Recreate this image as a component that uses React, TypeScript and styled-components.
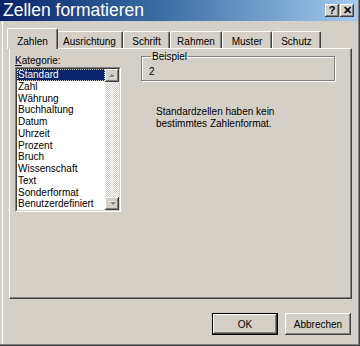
import React from "react";
import styled, { createGlobalStyle } from "styled-components";

const GlobalStyle = createGlobalStyle`
  html, body {
    margin: 0;
    padding: 0;
    background: #d4d0c8;
  }
  body {
    font-family: "Liberation Sans", Arial, sans-serif;
    font-size: 10px;
    color: #000;
  }
`;

const Window = styled.div`
  width: 360px;
  height: 346px;
  box-sizing: border-box;
  padding: 0 2px 2px 0;
  background: #d4d0c8;
  display: flex;
  flex-direction: column;
  box-shadow: inset -1px -1px #404040, inset -2px -2px #808080,
    inset 2px 0 #d4d0c8, inset 3px 0 #fff;
`;

const TitleBar = styled.div`
  height: 21px;
  flex-shrink: 0;
  display: flex;
  align-items: center;
  justify-content: space-between;
  padding: 0 4px 0 3px;
  background: linear-gradient(90deg, #0a246a 0%, #3a6ea5 45%, #a6caf0 100%);
`;

const Title = styled.span`
  color: #fff;
  font-size: 17.5px;
  line-height: 21px;
`;

const TitleButtons = styled.div`
  display: flex;
  gap: 1px;
`;

const TitleButton = styled.div`
  width: 14px;
  height: 13px;
  box-sizing: border-box;
  background: #d4d0c8;
  box-shadow: inset -1px -1px #404040, inset 1px 1px #fff,
    inset -2px -2px #808080;
  display: flex;
  align-items: center;
  justify-content: center;
  font-weight: bold;
  font-size: 11px;
  line-height: 1;
  color: #000;
`;

const Body = styled.div`
  flex: 1;
  display: flex;
  flex-direction: column;
  padding: 7px 6px 0 7px;
`;

const TabStrip = styled.div`
  display: flex;
  align-items: flex-end;
  height: 21px;
  margin-bottom: -1px;
  padding-left: 2px;
  position: relative;
  z-index: 1;
`;

const Tab = styled.div<{ $w: number; $active?: boolean }>`
  width: ${(p) => p.$w}px;
  height: ${(p) => (p.$active ? 21 : 17)}px;
  margin: ${(p) => (p.$active ? "0 -2px" : "0 0 1px 0")};
  position: relative;
  z-index: ${(p) => (p.$active ? 2 : 1)};
  box-sizing: border-box;
  background: #d4d0c8;
  border-top: 1px solid #fff;
  border-left: 1px solid #fff;
  border-right: 1px solid #404040;
  border-radius: 2px 2px 0 0;
  box-shadow: inset -1px 0 #808080;
  display: flex;
  justify-content: center;
  padding-top: ${(p) => (p.$active ? 7 : 4)}px;
  line-height: 11px;
`;

const Panel = styled.div`
  height: 251px;
  margin-left: 2px;
  box-sizing: border-box;
  border-top: 1px solid #fff;
  border-left: 1px solid #fff;
  border-right: 1px solid #404040;
  border-bottom: 1px solid #404040;
  box-shadow: inset -1px -1px #808080;
  display: flex;
  padding: 6px 0 0 5px;
`;

const LeftCol = styled.div`
  width: 106px;
  display: flex;
  flex-direction: column;
`;

const Label = styled.div`
  line-height: 12px;
  height: 12px;
`;

const ListBox = styled.div`
  height: 145px;
  box-sizing: border-box;
  background: #fff;
  border-top: 1px solid #808080;
  border-left: 1px solid #808080;
  border-right: 1px solid #fff;
  border-bottom: 1px solid #fff;
  display: flex;
`;

const ListInner = styled.div`
  flex: 1;
  display: flex;
  border-top: 1px solid #404040;
  border-left: 1px solid #404040;
  border-right: 1px solid #d4d0c8;
  border-bottom: 1px solid #d4d0c8;
`;

const Items = styled.div`
  flex: 1;
  display: flex;
  flex-direction: column;
`;

const Item = styled.div<{ $selected?: boolean }>`
  height: 11.75px;
  line-height: 11.75px;
  padding-left: 1px;
  box-sizing: border-box;
  white-space: nowrap;
  background: ${(p) => (p.$selected ? "#0a246a" : "transparent")};
  color: ${(p) => (p.$selected ? "#fff" : "#000")};
  outline: ${(p) => (p.$selected ? "1px dotted #d4d0c8" : "none")};
  outline-offset: -1px;
`;

const ScrollBar = styled.div`
  width: 14px;
  display: flex;
  flex-direction: column;
  background-color: #fff;
  background-image: repeating-conic-gradient(#d4d0c8 0 25%, #fff 0 50%);
  background-size: 2px 2px;
`;

const ScrollButton = styled.div`
  height: 13px;
  box-sizing: border-box;
  background: #d4d0c8;
  box-shadow: inset -1px -1px #404040, inset 1px 1px #fff,
    inset -2px -2px #808080;
  display: flex;
  align-items: center;
  justify-content: center;
`;

const Track = styled.div`
  flex: 1;
`;

const RightCol = styled.div`
  display: flex;
  flex-direction: column;
  margin-left: 20px;
`;

const GroupBox = styled.fieldset`
  width: 194px;
  height: 30px;
  margin: -4px 0 0 0;
  padding: 4px 6px 0 7px;
  box-sizing: border-box;
  border: 1px solid #808080;
  box-shadow: inset 1px 1px #fff, 1px 1px #fff;
  line-height: 12px;
`;

const Legend = styled.legend`
  padding: 0 1px;
  margin-left: 2px;
  line-height: 11px;
`;

const Description = styled.div`
  margin: 25px 0 0 15px;
  line-height: 12px;
`;

const ButtonRow = styled.div`
  display: flex;
  justify-content: flex-end;
  gap: 7px;
  margin: 14px 1px 0 0;
`;

const Button = styled.div<{ $default?: boolean }>`
  width: 66px;
  height: 22px;
  box-sizing: border-box;
  background: #d4d0c8;
  display: flex;
  align-items: center;
  justify-content: center;
  border: ${(p) => (p.$default ? "1px solid #000" : "none")};
  box-shadow: inset -1px -1px #404040, inset 1px 1px #fff,
    inset -2px -2px #808080;
`;

const Arrow = ({ down }: { down?: boolean }) => (
  <svg width="7" height="5" viewBox="0 0 7 5">
    <g transform={down ? "rotate(180 3.5 2.5)" : undefined}>
      <path d="M1 4.5 L4 1.5 L7 4.5 Z" fill="#fff" />
      <path d="M0 4 L3 1 L6 4 Z" fill="#808080" />
    </g>
  </svg>
);

const tabs = [
  { label: "Zahlen", w: 51, active: true },
  { label: "Ausrichtung", w: 67 },
  { label: "Schrift", w: 47 },
  { label: "Rahmen", w: 52 },
  { label: "Muster", w: 50 },
  { label: "Schutz", w: 49 },
];

const kategorien = [
  "Standard",
  "Zahl",
  "Währung",
  "Buchhaltung",
  "Datum",
  "Uhrzeit",
  "Prozent",
  "Bruch",
  "Wissenschaft",
  "Text",
  "Sonderformat",
  "Benutzerdefiniert",
];

export default function App() {
  return (
    <>
      <GlobalStyle />
      <Window>
        <TitleBar>
          <Title>Zellen formatieren</Title>
          <TitleButtons>
            <TitleButton>?</TitleButton>
            <TitleButton>✕</TitleButton>
          </TitleButtons>
        </TitleBar>
        <Body>
          <TabStrip>
            {tabs.map((t) => (
              <Tab key={t.label} $w={t.w} $active={t.active}>
                {t.label}
              </Tab>
            ))}
          </TabStrip>
          <Panel>
            <LeftCol>
              <Label>
                <u>K</u>ategorie:
              </Label>
              <ListBox>
                <ListInner>
                  <Items>
                    {kategorien.map((k, i) => (
                      <Item key={k} $selected={i === 0}>
                        {k}
                      </Item>
                    ))}
                  </Items>
                  <ScrollBar>
                    <ScrollButton>
                      <Arrow />
                    </ScrollButton>
                    <Track />
                    <ScrollButton>
                      <Arrow down />
                    </ScrollButton>
                  </ScrollBar>
                </ListInner>
              </ListBox>
            </LeftCol>
            <RightCol>
              <GroupBox>
                <Legend>Beispiel</Legend>
                2
              </GroupBox>
              <Description>
                Standardzellen haben kein
                <br />
                bestimmtes Zahlenformat.
              </Description>
            </RightCol>
          </Panel>
          <ButtonRow>
            <Button $default>OK</Button>
            <Button>Abbrechen</Button>
          </ButtonRow>
        </Body>
      </Window>
    </>
  );
}
